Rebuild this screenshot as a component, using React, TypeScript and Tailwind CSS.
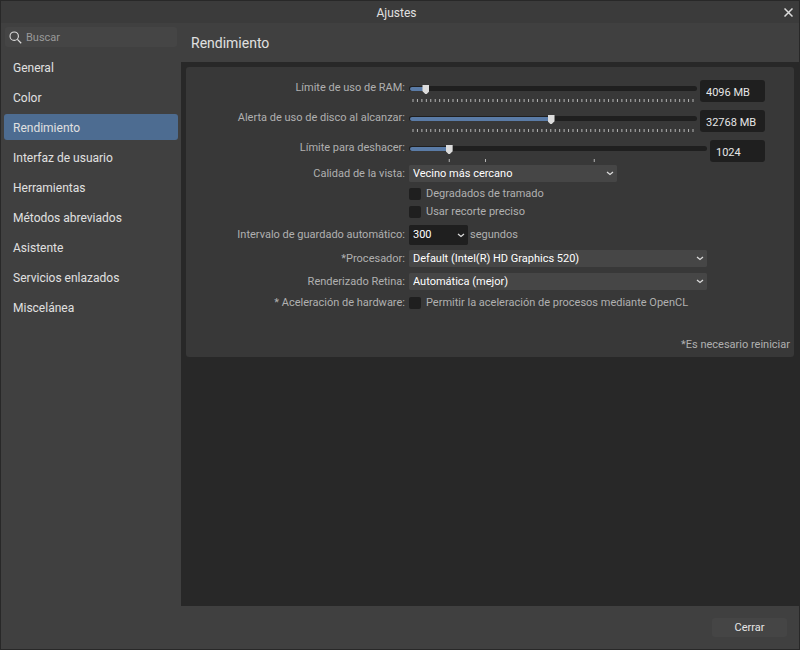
import { useState } from 'react'
import type { ReactNode } from 'react'

const sections = [
  'General',
  'Color',
  'Rendimiento',
  'Interfaz de usuario',
  'Herramientas',
  'Métodos abreviados',
  'Asistente',
  'Servicios enlazados',
  'Miscelánea',
]

// evenly spaced marks, in percent of the slider's travel
const evenTicks = Array.from({ length: 64 }, (_, i) => (i * 100) / 63)
const undoTicks = [12.5, 25, 62.5]

function Chevron() {
  return (
    <svg viewBox="0 0 8 5" className="pointer-events-none col-start-1 row-start-1 mr-[3px] h-[5px] w-2 justify-self-end">
      <path d="M1 1l3 2.4L7 1" fill="none" stroke="#dcdcdc" strokeWidth="1.3" />
    </svg>
  )
}

function Row({ id, label, className = '', children }: { id: string; label: string; className?: string; children: ReactNode }) {
  return (
    <div className={`grid grid-cols-[219px_1fr] items-center gap-1 ${className}`}>
      <label htmlFor={id} className="text-right whitespace-nowrap">
        {label}
      </label>
      {children}
    </div>
  )
}

interface SliderRowProps {
  id: string
  label: string
  initial: number
  value: string
  ticks: number[]
  boxClass: string
}

function SliderRow({ id, label, initial, value, ticks, boxClass }: SliderRowProps) {
  const [position, setPosition] = useState(initial)

  return (
    <Row id={id} label={label} className="h-[30px]">
      <div className="flex h-full items-start gap-[3px]">
        <div className="min-w-0 flex-1 pt-3">
          <div className="grid items-start">
            <div className="col-start-1 row-start-1 mt-px h-[5px] overflow-hidden rounded-full bg-[#1f1f1f] px-px pt-px">
              <div className="h-full rounded-l-full bg-[#5a7ba6]" style={{ width: `${position}%` }} />
            </div>
            <input
              id={id}
              type="range"
              min={0}
              max={100}
              step={0.1}
              value={position}
              onChange={(e) => setPosition(Number(e.target.value))}
              className="col-start-1 row-start-1 m-0 block h-[9px] w-full appearance-none bg-transparent [&::-webkit-slider-thumb]:h-[9px] [&::-webkit-slider-thumb]:w-[7px] [&::-webkit-slider-thumb]:appearance-none [&::-webkit-slider-thumb]:bg-[#dcdcdc] [&::-webkit-slider-thumb]:[clip-path:polygon(0_0,100%_0,100%_70%,60%_100%,40%_100%,0_70%)]"
            />
          </div>
          <div className="px-1 pt-[5px]">
            <svg className="block h-[3px] w-full overflow-visible">
              {ticks.map((tick) => (
                <line key={tick} x1={`${tick}%`} x2={`${tick}%`} y1="0" y2="3" stroke="#b4b4b4" strokeWidth="1" />
              ))}
            </svg>
          </div>
        </div>
        <input
          type="text"
          aria-label={label}
          defaultValue={value}
          className={`mt-[7px] h-[22px] rounded-[3px] bg-[#1f1f1f] px-1.5 pt-0.5 text-[#e6e6e6] outline-none ${boxClass}`}
        />
      </div>
    </Row>
  )
}

function Dropdown({ id, value, className = '' }: { id: string; value: string; className?: string }) {
  return (
    <div className={`grid items-center ${className}`}>
      <select
        id={id}
        defaultValue={value}
        className="col-start-1 row-start-1 h-full w-full appearance-none rounded-[2px] bg-inherit px-1 text-white outline-none"
      >
        <option>{value}</option>
      </select>
      <Chevron />
    </div>
  )
}

function CheckBox({ id }: { id: string }) {
  return (
    <input
      id={id}
      type="checkbox"
      className="size-3 shrink-0 appearance-none rounded-[2px] bg-[#1f1f1f] checked:bg-[#5a7ba6]"
    />
  )
}

export default function App() {
  const [active, setActive] = useState('Rendimiento')

  return (
    <div className="flex min-h-screen flex-col border border-[#282828] bg-[#404040] font-['Roboto','Open_Sans',sans-serif] text-[11px] leading-4 text-[#b0b0b0]">
      <header className="flex h-[22px] items-center bg-[#3b3b3b] pr-1.5">
        <h1 className="flex-1 pt-0.5 pl-2 text-center text-xs text-[#e0e0e0]">Ajustes</h1>
        <button type="button" aria-label="Cerrar ventana">
          <svg viewBox="0 0 9 9" className="block size-[9px]">
            <path d="M0.5 0.5l8 8M8.5 0.5l-8 8" stroke="#dcdcdc" strokeWidth="1.5" />
          </svg>
        </button>
      </header>

      <div className="flex flex-1">
        <aside className="w-[180px] shrink-0 px-[3px] pt-1">
          <label className="mx-px flex h-5 items-center gap-1 rounded-[3px] bg-[#454545] px-1">
            <svg viewBox="0 0 13 13" className="size-[13px] shrink-0">
              <circle cx="5.2" cy="5.2" r="4.2" fill="none" stroke="#dcdcdc" strokeWidth="1.1" />
              <path d="M8.4 8.4l3.8 3.8" stroke="#dcdcdc" strokeWidth="1.3" />
            </svg>
            <input
              type="search"
              placeholder="Buscar"
              aria-label="Buscar"
              className="w-full min-w-0 bg-transparent pt-0.5 outline-none placeholder:text-[#999999]"
            />
          </label>
          <nav className="mt-[7px] flex flex-col gap-1">
            {sections.map((section) => (
              <button
                key={section}
                type="button"
                onClick={() => setActive(section)}
                className={`h-[26px] rounded-[3px] px-[9px] pt-0.5 text-left text-xs text-[#e0e0e0] ${
                  section === active ? 'bg-[#4d6c91]' : ''
                }`}
              >
                {section}
              </button>
            ))}
          </nav>
        </aside>

        <main className="flex min-w-0 flex-1 flex-col">
          <h2 className="flex h-[39px] items-center px-2.5 text-sm text-[#e0e0e0]">Rendimiento</h2>

          <div className="flex-1 bg-[#282828] p-[5px]">
            <form className="rounded-[3px] bg-[#383838] pt-1.5 pb-1">
              <div className="pr-[29px]">
                <SliderRow id="ram" label="Límite de uso de RAM:" initial={4.8} value="4096 MB" ticks={evenTicks} boxClass="w-[65px]" />
                <SliderRow id="disk" label="Alerta de uso de disco al alcanzar:" initial={49.3} value="32768 MB" ticks={evenTicks} boxClass="w-[65px]" />
                <SliderRow id="undo" label="Límite para deshacer:" initial={12.6} value="1024" ticks={undoTicks} boxClass="w-[55px]" />

                <Row id="quality" label="Calidad de la vista:" className="mt-0.5 h-[17px]">
                  <Dropdown id="quality" value="Vecino más cercano" className="h-[17px] w-52 rounded-[2px] bg-[#464646]" />
                </Row>

                <div className="mt-[3px] pl-[223px]">
                  <div className="flex h-[18px] items-center gap-[5px]">
                    <CheckBox id="dither" />
                    <label htmlFor="dither">Degradados de tramado</label>
                  </div>
                  <div className="flex h-[18px] items-center gap-[5px]">
                    <CheckBox id="clip" />
                    <label htmlFor="clip">Usar recorte preciso</label>
                  </div>
                </div>

                <Row id="autosave" label="Intervalo de guardado automático:" className="mt-1 h-5">
                  <div className="flex items-center gap-0.5">
                    <Dropdown id="autosave" value="300" className="h-5 w-[59px] rounded-[3px] bg-[#1f1f1f]" />
                    <span>segundos</span>
                  </div>
                </Row>
                <Row id="renderer" label="*Procesador:" className="mt-[5px] h-[17px] pr-[58px]">
                  <Dropdown id="renderer" value="Default (Intel(R) HD Graphics 520)" className="h-[17px] rounded-[2px] bg-[#464646]" />
                </Row>
                <Row id="retina" label="Renderizado Retina:" className="mt-1.5 h-[17px] pr-[58px]">
                  <Dropdown id="retina" value="Automática (mejor)" className="h-[17px] rounded-[2px] bg-[#464646]" />
                </Row>
                <Row id="opencl" label="* Aceleración de hardware:" className="mt-[5px] h-3.5">
                  <div className="flex items-center gap-[5px]">
                    <CheckBox id="opencl" />
                    <label htmlFor="opencl">Permitir la aceleración de procesos mediante OpenCL</label>
                  </div>
                </Row>
              </div>
              <p className="mt-7 pr-1 text-right">*Es necesario reiniciar</p>
            </form>
          </div>
        </main>
      </div>

      <footer className="flex h-[43px] items-center justify-end pr-3">
        <button type="button" className="h-[19px] w-[75px] rounded-[3px] bg-[#454545] text-[#e6e6e6]">
          Cerrar
        </button>
      </footer>
    </div>
  )
}
